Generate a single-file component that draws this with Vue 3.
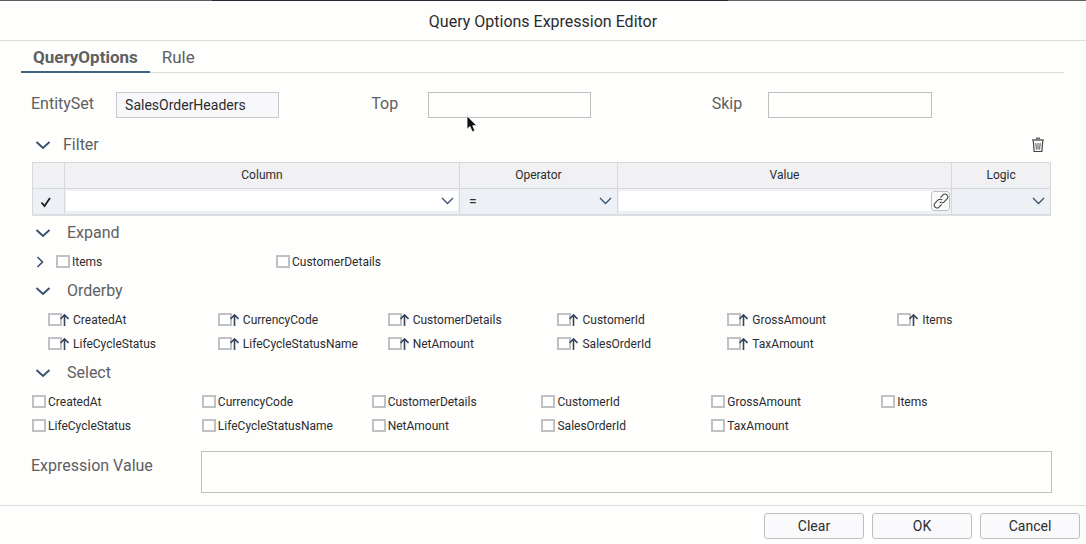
<script setup>
import { reactive, ref } from 'vue'

const limits = reactive([
  { id: 'entity-set', label: 'EntitySet', value: 'SalesOrderHeaders', filled: true },
  { id: 'top', label: 'Top', value: '', filled: false },
  { id: 'skip', label: 'Skip', value: '', filled: false },
])

const properties = [
  'CreatedAt', 'CurrencyCode', 'CustomerDetails', 'CustomerId', 'GrossAmount', 'Items',
  'LifeCycleStatus', 'LifeCycleStatusName', 'NetAmount', 'SalesOrderId', 'TaxAmount',
]
const expandable = ['Items', 'CustomerDetails']

const open = reactive({ filter: true, expand: true, orderby: true, select: true })
const expand = ref([])
const orderby = ref([])
const select = ref([])
const rule = reactive({ column: '', operator: '=', value: '', logic: '' })
const expression = ref('')
</script>

<template>
  <div class="dialog">
    <div class="backdrop-edge"></div>
    <header class="title-bar"><h1>Query Options Expression Editor</h1></header>

    <nav class="tabs" role="tablist">
      <button class="tab active" role="tab" aria-selected="true">QueryOptions</button>
      <button class="tab" role="tab" aria-selected="false">Rule</button>
    </nav>

    <main class="panel">
      <div class="limits">
        <div v-for="f in limits" :key="f.id" class="limit" :class="{ wide: f.filled }">
          <label :for="f.id">{{ f.label }}</label>
          <input :id="f.id" v-model="f.value" type="text" :class="{ filled: f.filled }" />
        </div>
        <svg class="pointer" width="12" height="18" viewBox="0 0 12 18" aria-hidden="true">
          <path d="M1 .8v13.400l3-2.700 2.200 5.300 2.700-1.100-2.200-5h4.100z" fill="#111" stroke="#fff" stroke-width=".8" />
        </svg>
      </div>

      <section>
        <h2 class="section-head tight">
          <button class="toggle" aria-label="Toggle Filter" @click="open.filter = !open.filter">
            <svg width="16" height="16" viewBox="0 0 16 16"><path d="M1.500 5L8 11l6.500-6" /></svg>
          </button>
          <span>Filter</span>
          <button class="trash" aria-label="Delete">
            <svg width="14" height="16" viewBox="0 0 14 16">
              <path d="M1 2.500h12M1 3.500h12" stroke="#858585" />
              <path d="M5 1.200h4" stroke="#222" />
              <path d="M2.300 4l.8 10.500h7.800l.8-10.500" stroke="#444" stroke-width="1.200" fill="none" />
              <path d="M4.800 6l.6 6.500M7 6v6.500M9.200 6l-.6 6.500" stroke="#555" fill="none" />
            </svg>
          </button>
        </h2>
        <table v-if="open.filter" class="filter">
          <colgroup>
            <col class="c-mark" /><col class="c-column" /><col class="c-operator" /><col class="c-value" /><col class="c-logic" />
          </colgroup>
          <thead>
            <tr><th></th><th>Column</th><th>Operator</th><th>Value</th><th>Logic</th></tr>
          </thead>
          <tbody>
            <tr>
              <td class="mark">
                <svg width="12" height="12" viewBox="0 0 12 12"><path d="M1.500 6.500l3 3.500 5.500-8" fill="none" stroke="#1c1c1c" stroke-width="1.800" /></svg>
              </td>
              <td>
                <div class="cell white">
                  <input v-model="rule.column" type="text" aria-label="Column" />
                  <svg class="chev" width="14" height="10" viewBox="0 0 14 10"><path d="M2 2l5.500 5.500L13 2" /></svg>
                </div>
              </td>
              <td>
                <div class="cell">
                  <select v-model="rule.operator" aria-label="Operator"><option>=</option></select>
                  <svg class="chev" width="14" height="10" viewBox="0 0 14 10"><path d="M2 2l5.500 5.500L13 2" /></svg>
                </div>
              </td>
              <td>
                <div class="cell white">
                  <input v-model="rule.value" type="text" aria-label="Value" />
                  <button class="link" aria-label="Bind value">
                    <svg width="16" height="16" viewBox="0 0 16 16">
                      <g transform="rotate(-46 8 8)" fill="none" stroke="#3c3c3c">
                        <path d="M6 10.800H2.300a2.800 2.800 0 0 1 0-5.600h4.500a2.800 2.800 0 0 1 2.700 3" />
                        <path d="M10 5.200h3.700a2.800 2.800 0 0 1 0 5.600H9.200a2.800 2.800 0 0 1-2.700-3" />
                      </g>
                    </svg>
                  </button>
                </div>
              </td>
              <td>
                <div class="cell">
                  <select v-model="rule.logic" aria-label="Logic"><option value=""></option></select>
                  <svg class="chev" width="14" height="10" viewBox="0 0 14 10"><path d="M2 2l5.500 5.500L13 2" /></svg>
                </div>
              </td>
            </tr>
          </tbody>
        </table>
      </section>

      <section>
        <h2 class="section-head">
          <button class="toggle" aria-label="Toggle Expand" @click="open.expand = !open.expand">
            <svg width="16" height="16" viewBox="0 0 16 16"><path d="M1.500 5L8 11l6.500-6" /></svg>
          </button>
          <span>Expand</span>
        </h2>
        <div v-if="open.expand" class="expand-row">
          <button class="toggle child" aria-label="Show children of Items">
            <svg width="8" height="12" viewBox="0 0 8 12"><path d="M1.500 1L6.500 6l-5 5" /></svg>
          </button>
          <label v-for="p in expandable" :key="p" class="check">
            <input v-model="expand" type="checkbox" :value="p" /><span>{{ p }}</span>
          </label>
        </div>
      </section>

      <section>
        <h2 class="section-head">
          <button class="toggle" aria-label="Toggle Orderby" @click="open.orderby = !open.orderby">
            <svg width="16" height="16" viewBox="0 0 16 16"><path d="M1.500 5L8 11l6.500-6" /></svg>
          </button>
          <span>Orderby</span>
        </h2>
        <div v-if="open.orderby" class="grid ordered">
          <label v-for="p in properties" :key="p" class="check">
            <input v-model="orderby" type="checkbox" :value="p" />
            <svg class="arrow" width="10" height="14" viewBox="0 0 10 14"><path d="M5.500 13V2M1.500 6l4-4 4 4" /></svg>
            <span>{{ p }}</span>
          </label>
        </div>
      </section>

      <section>
        <h2 class="section-head">
          <button class="toggle" aria-label="Toggle Select" @click="open.select = !open.select">
            <svg width="16" height="16" viewBox="0 0 16 16"><path d="M1.500 5L8 11l6.500-6" /></svg>
          </button>
          <span>Select</span>
        </h2>
        <div v-if="open.select" class="grid">
          <label v-for="p in properties" :key="p" class="check">
            <input v-model="select" type="checkbox" :value="p" /><span>{{ p }}</span>
          </label>
        </div>
      </section>

      <div class="expression">
        <label for="expression">Expression Value</label>
        <textarea id="expression" v-model="expression" rows="2"></textarea>
      </div>
    </main>

    <footer class="actions">
      <button>Clear</button>
      <button>OK</button>
      <button>Cancel</button>
    </footer>
  </div>
</template>

<style>
body {
  background: #fefefd;
}
</style>

<style scoped>
.dialog {
  font-family: Roboto, "Liberation Sans", sans-serif;
  font-size: 16px;
  line-height: 20px;
  color: #5f6062;
}
.dialog *,
.dialog *::before {
  box-sizing: border-box;
}
button,
input,
select,
textarea {
  font: inherit;
  color: #2b2c2e;
  margin: 0;
  padding: 0;
  border: 0;
  border-radius: 0;
  background: none;
}
svg {
  display: block;
  flex: none;
}
.backdrop-edge {
  height: 1px;
  background: linear-gradient(90deg, #5f5c60 19.5%, #272632 19.5% 67%, #626164 67%);
}
.title-bar {
  padding: 11px 0 8px;
  border-bottom: 1px solid #dcdddd;
  text-align: center;
}
h1 {
  margin: 0;
  font-size: 16px;
  font-weight: 400;
  line-height: 20px;
  color: #2b2c2e;
}
.tabs {
  display: flex;
  margin: 0 22px 0 21px;
  border-bottom: 1px solid #dcdddd;
}
.tab {
  height: 32px;
  margin-bottom: -1px;
  padding: 2px 12px 0;
  font-size: 17px;
  color: #5f6062;
  border-bottom: 2px solid transparent;
}
.tab.active {
  font-weight: 700;
  border-bottom-color: #41637f;
}
.panel {
  padding: 19px 34px 12px 31px;
}
.limits {
  position: relative;
  display: grid;
  grid-template-columns: repeat(3, 1fr);
}
.limit {
  display: grid;
  grid-template-columns: 2fr 6fr 4fr;
  align-items: center;
}
.limit.wide {
  grid-template-columns: 3fr 6fr 3fr;
}
.limit input {
  width: calc(100% - 7px);
  height: 26px;
  padding: 0 8px;
  border: 1px solid #bfbfbf;
  font-size: 14px;
}
.limit input.filled {
  background: #f8f8fa;
  border-color: #c8c9cc;
}
.limit label {
  padding-bottom: 2px;
}
.pointer {
  position: absolute;
  left: 435px;
  top: 23px;
}
.section-head {
  display: flex;
  align-items: center;
  gap: 16px;
  height: 26px;
  margin: 4px 1px;
  padding-left: 3px;
  font-size: 16px;
  font-weight: 400;
  line-height: 20px;
}
.section-head.tight {
  gap: 12px;
  margin-top: 14px;
}
.toggle svg {
  fill: none;
  stroke: #36516f;
  stroke-width: 1.900;
}
.trash {
  margin-left: auto;
  margin-right: 6px;
}
.filter {
  width: calc(100% - 2px);
  margin-left: 1px;
  table-layout: fixed;
  border-collapse: collapse;
  font-size: 12px;
  line-height: 16px;
  color: #2b2c2e;
}
.c-mark {
  width: 32px;
}
.c-column {
  width: 38.8%;
}
.c-operator {
  width: 15.5%;
}
.c-logic {
  width: 9.7%;
}
.filter th,
.filter td {
  height: 26px;
  padding: 0 1px;
  border: 1px solid #d6d8da;
}
.filter th {
  padding-bottom: 2px;
  background: #f1f1f3;
  font-weight: 400;
}
.filter td {
  background: #edf1f5;
  border-bottom: 2px solid #dcdde0;
}
.filter td.mark {
  padding: 2px 6px 0 0;
}
.mark svg {
  margin: 0 auto;
}
.cell {
  position: relative;
  display: flex;
  align-items: center;
  height: 20px;
}
.cell.white {
  background: #fff;
}
.cell input,
.cell select {
  flex: 1;
  min-width: 0;
  height: 20px;
  padding: 0 8px;
  font-size: 14px;
  appearance: none;
}
.chev {
  position: absolute;
  right: 4px;
  top: 5px;
  fill: none;
  stroke: #36516f;
  stroke-width: 1.300;
  pointer-events: none;
}
.link {
  width: 19px;
  height: 20px;
  border: 1px solid #bdc0c2;
  border-radius: 3px;
  background: #fafafa;
}
.link svg {
  margin: 0 auto;
}
.check {
  display: flex;
  align-items: center;
  height: 24px;
  font-size: 12px;
  line-height: 16px;
  color: #2b2c2e;
}
.check input {
  appearance: none;
  width: 14px;
  height: 13px;
  border: 2px solid #c1c1c4;
  background: #fff;
}
.check input:checked {
  background: #36516f;
}
.check span {
  margin-left: 2px;
}
.expand-row {
  display: flex;
  align-items: center;
  padding-left: 5px;
}
.expand-row .check {
  width: 220px;
}
.toggle.child {
  width: 20px;
}
.child svg {
  stroke-width: 1.600;
}
.grid {
  display: grid;
  grid-template-columns: repeat(6, 1fr);
  padding: 0 1px;
}
.ordered .check {
  padding-left: 16px;
}
.arrow {
  margin-left: -3px;
  fill: none;
  stroke: #36465c;
  stroke-width: 1.600;
}
.ordered .check span {
  margin-left: 4px;
}
.expression {
  display: grid;
  grid-template-columns: 1fr 5fr;
  margin-top: 13px;
}
.expression label {
  padding-top: 5px;
}
.expression textarea {
  height: 42px;
  border: 1px solid #bfbfbf;
  resize: none;
}
.actions {
  display: flex;
  justify-content: flex-end;
  gap: 8px;
  padding: 7px 6px 5px;
  border-top: 1px solid #d9dadd;
}
.actions button {
  width: 100px;
  height: 26px;
  border: 1px solid #bdbec0;
  border-radius: 3px;
  background: #fafafc;
  font-size: 14px;
}
</style>
